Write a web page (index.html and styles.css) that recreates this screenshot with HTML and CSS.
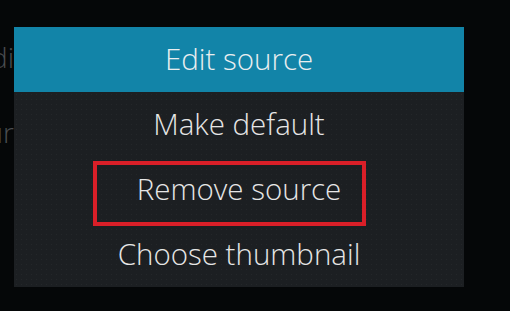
FILE: index.html
```html
<!DOCTYPE html>
<html>
<head>
<meta charset="utf-8">
<link rel="stylesheet" href="styles.css">
</head>
<body>
<div class="bg">
  <div class="bg-line bg-line-1">di</div>
  <div class="bg-line bg-line-2">ur</div>
</div>
<div class="dialog">
  <div class="dialog-header">Edit source</div>
  <div class="dialog-list">
    <div class="item">Make default</div>
    <div class="item">Remove source</div>
    <div class="item">Choose thumbnail</div>
  </div>
</div>
<div class="highlight"></div>
</body>
</html>
```
FILE: styles.css
```css
html, body {
  margin: 0;
  padding: 0;
  width: 510px;
  height: 311px;
  overflow: hidden;
  background: #050708;
  font-family: "Open Sans", "Noto Sans", sans-serif;
}
.bg {
  display: flex;
  flex-direction: column;
  padding-top: 38px;
}
.bg-line {
  width: 14px;
  display: flex;
  justify-content: flex-end;
  white-space: nowrap;
  color: #4a4d50;
  font-size: 28px;
  font-weight: 300;
  line-height: 38px;
}
.bg-line-2 {
  margin-top: 37px;
}
.dialog {
  position: absolute;
  left: 14px;
  top: 27px;
  width: 450px;
  height: 260px;
  display: flex;
  flex-direction: column;
  background-color: #1c1f22;
  background-image: radial-gradient(rgba(255,255,255,0.035) 0.6px, transparent 0.8px);
  background-size: 5px 5px;
}
.dialog-header {
  height: 65px;
  background: #1284a8;
  color: #e9eef0;
  display: flex;
  align-items: center;
  justify-content: center;
  font-size: 29.5px;
  font-weight: 350;
  padding-bottom: 2px;
  box-sizing: border-box;
}
.dialog-list {
  display: flex;
  flex-direction: column;
  flex: 1;
}
.item {
  flex: 1;
  display: flex;
  align-items: center;
  justify-content: center;
  color: #e6e6e6;
  font-size: 29.5px;
  font-weight: 350;
  padding-bottom: 3px;
}
.highlight {
  position: absolute;
  left: 93px;
  top: 161px;
  width: 265px;
  height: 57px;
  border: 4px solid #da1f28;
}
```
